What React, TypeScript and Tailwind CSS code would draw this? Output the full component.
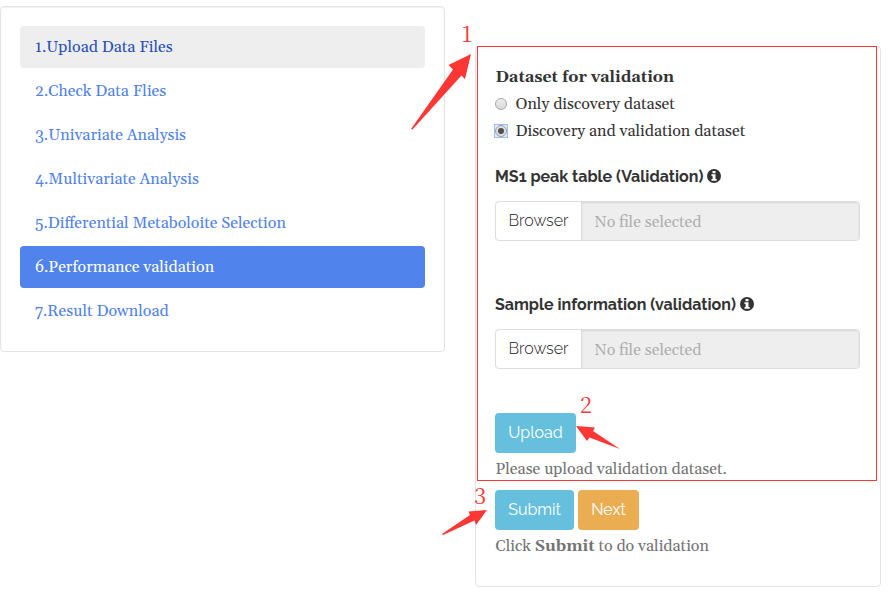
const serif = "font-[Gelasio,'Liberation_Serif',serif]";
const sans = "font-[Raleway,Lato,'Open_Sans',sans-serif]";
const note = "font-['Noto_Serif_CJK_SC','Liberation_Serif',serif] text-[22px] text-[#fe3634]";

const steps = [
  { label: '1.Upload Data Files', tone: 'bg-[#eeeeee] text-[#2850b8]' },
  { label: '2.Check Data Flies', tone: 'text-[#5182ec]' },
  { label: '3.Univariate Analysis', tone: 'text-[#5182ec]' },
  { label: '4.Multivariate Analysis', tone: 'text-[#5182ec]' },
  { label: '5.Differential Metaboloite Selection', tone: 'text-[#5182ec]' },
  { label: '6.Performance validation', tone: 'bg-[#5083ec] text-white' },
  { label: '7.Result Download', tone: 'text-[#5182ec]' },
];

function InfoIcon() {
  return (
    <svg className="-mt-px ml-[4px] h-[14px] w-[14px]" viewBox="0 0 14 14">
      <circle cx="7" cy="7" r="7" fill="#333" />
      <path d="M5.500 2h3v2.200h-3zM4.500 5.200h4v4.800h1.200v1.800H4.500V10h1.100V7H4.500z" fill="#fff" />
    </svg>
  );
}

function FileInput() {
  return (
    <div className="flex h-10 w-[365px] overflow-hidden rounded-[4px] border border-[#dddddd]">
      <div className={`w-[86px] border-r border-[#dddddd] pl-[12.5px] text-[16px] font-light leading-[37px] text-[#222] ${sans}`}>Browser</div>
      <div className="flex-1 bg-[#eeeeee] pl-[12.5px] leading-[41px] text-[#b0b0b0] shadow-[inset_0_1px_2px_rgba(0,0,0,0.1)]">No file selected</div>
    </div>
  );
}

export default function App() {
  return (
    <div className={`relative flex h-[597px] w-[890px] items-start overflow-hidden bg-white text-[16px] leading-[27px] ${serif}`}>
      <nav className="mt-[6px] flex h-[346px] w-[445px] flex-col gap-[2px] rounded-[4px] border border-[#e3e3e3] px-[19px] pt-[19px] shadow-[inset_0_1px_1px_rgba(0,0,0,0.05)]">
        {steps.map((s) => (
          <a key={s.label} className={`block h-[42px] whitespace-nowrap rounded-[4px] px-[15px] leading-[43px] ${s.tone}`}>
            {s.label}
          </a>
        ))}
      </nav>

      <main className="ml-[30px] mt-[46px] flex h-[541px] w-[406px] flex-col rounded-[4px] border border-[#e3e3e3] pl-[19px] pt-[16px] text-[#333]">
        <div className="h-[27px] pl-[0.5px] pt-px font-bold">Dataset for validation</div>
        <label className="flex h-[27px] items-center">
          <span className="mr-[8.5px] h-[12px] w-[12px] rounded-full border border-[#a8a8a8] bg-linear-to-b from-[#eeeeee] to-[#d8d8d8]" />
          <span className="pt-[2px]">Only discovery dataset</span>
        </label>
        <label className="flex h-[27px] items-center">
          <span className="-ml-px mr-[7.5px] flex h-[14px] w-[14px] items-center justify-center bg-[#e4edfc] outline outline-[#9bbcf8] -outline-offset-1">
            <span className="flex h-[12px] w-[12px] items-center justify-center rounded-full border border-[#a0a0a0] bg-[#dddddd]">
              <span className="h-[6px] w-[6px] rounded-full bg-[#505050]" />
            </span>
          </span>
          <span className="pt-[2px]">Discovery and validation dataset</span>
        </label>
        <div className={`mt-[19px] flex h-[27px] items-center text-[16px] font-bold ${sans}`}>
          <span>MS1 peak table (Validation)</span><InfoIcon />
        </div>
        <div className="mt-[11px]"><FileInput /></div>
        <div className={`mt-[50px] flex h-[27px] items-center text-[16px] font-bold ${sans}`}>
          <span>Sample information (validation)</span><InfoIcon />
        </div>
        <div className="mt-[11px]"><FileInput /></div>
        <button className={`mt-[44px] h-10 w-[81px] shrink-0 rounded-[4px] bg-[#66bfdd] text-[16px] leading-[38px] text-white ${sans}`}>Upload</button>
        <div className="mt-[2px] h-[27px] pl-[0.5px] pt-px text-[#737373]">Please upload validation dataset.</div>
        <div className={`mt-[8px] flex gap-[4px] text-[16px] leading-[38px] text-white ${sans}`}>
          <button className="h-10 w-[79px] rounded-[4px] bg-[#66bfdd]">Submit</button>
          <button className="h-10 w-[61px] rounded-[4px] bg-[#ebad52]">Next</button>
        </div>
        <div className="mt-[2px] h-[27px] pl-[0.5px] pt-px text-[#737373]">Click <b>Submit</b> to do validation</div>
      </main>

      <div className="absolute left-[477px] top-[46px] h-[435px] w-[400px] border border-[#fe3634]" />
      <svg className="absolute left-0 top-0 h-[597px] w-[890px]" viewBox="0 0 890 597" fill="#fe3634">
        <path d="M471 54L448.500 65L453 69.500L411 129L412.500 129.500L461.500 75.500L465 79Z" />
        <path d="M576 426L587 441L589.500 437.500L620 449L593 431L595 427.500Z" />
        <path d="M487 510L468.500 511.500L470 515L442 534L443 535L474.500 520.500L476 525Z" />
      </svg>
      <span className={`absolute left-[461px] top-[19px] ${note}`}>1</span>
      <span className={`absolute left-[580px] top-[390px] ${note}`}>2</span>
      <span className={`absolute left-[474px] top-[481px] ${note}`}>3</span>
    </div>
  );
}
